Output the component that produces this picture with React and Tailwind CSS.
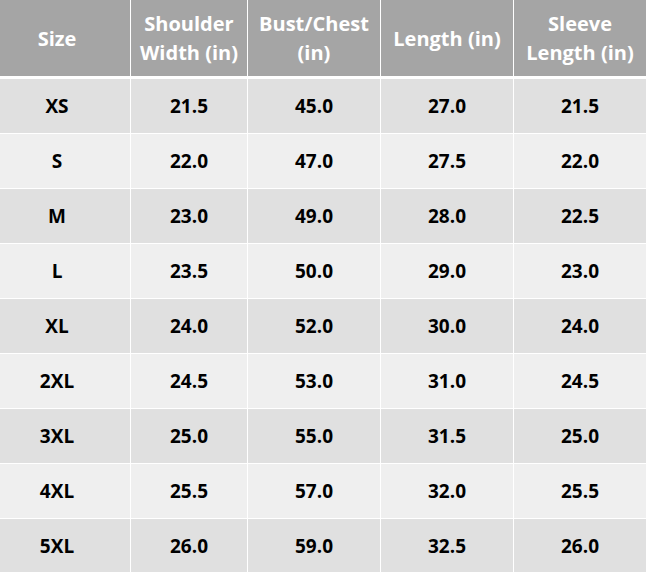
export default function App() {
  const rows = [
    ["XS", "21.5", "45.0", "27.0", "21.5"],
    ["S", "22.0", "47.0", "27.5", "22.0"],
    ["M", "23.0", "49.0", "28.0", "22.5"],
    ["L", "23.5", "50.0", "29.0", "23.0"],
    ["XL", "24.0", "52.0", "30.0", "24.0"],
    ["2XL", "24.5", "53.0", "31.0", "24.5"],
    ["3XL", "25.0", "55.0", "31.5", "25.0"],
    ["4XL", "25.5", "57.0", "32.0", "25.5"],
    ["5XL", "26.0", "59.0", "32.5", "26.0"],
  ];
  const headers = [
    ["Size"],
    ["Shoulder", "Width (in)"],
    ["Bust/Chest", "(in)"],
    ["Length (in)"],
    ["Sleeve", "Length (in)"],
  ];
  const cols = "grid grid-cols-[130px_116px_132px_132px_132px] gap-x-px";
  return (
    <div
      className="w-[646px] h-[572px] overflow-hidden bg-white flex flex-col"
      style={{ fontFamily: '"Open Sans", "Noto Sans", sans-serif' }}
    >
      <div className={`${cols} h-[76px] shrink-0`}>
        {headers.map((h, i) => (
          <div
            key={i}
            className={`bg-[#a5a5a5] text-white font-bold text-[20px] leading-[29px] flex flex-col items-center justify-center text-center ${i === 0 ? "pr-[16px]" : ""}`}
          >
            {h.map((l, j) => (
              <span key={j}>{l}</span>
            ))}
          </div>
        ))}
      </div>
      <div className="mt-[3px] flex flex-col gap-px">
        {rows.map((r, i) => (
          <div key={i} className={`${cols} h-[54px] shrink-0`}>
            {r.map((c, j) => (
              <div
                key={j}
                className={`${i % 2 === 0 ? "bg-[#e0e0e0]" : "bg-[#efefef]"} text-black font-bold text-[19px] flex items-center justify-center ${j === 0 ? "pr-[16px]" : ""}`}
              >
                {c}
              </div>
            ))}
          </div>
        ))}
      </div>
    </div>
  );
}
